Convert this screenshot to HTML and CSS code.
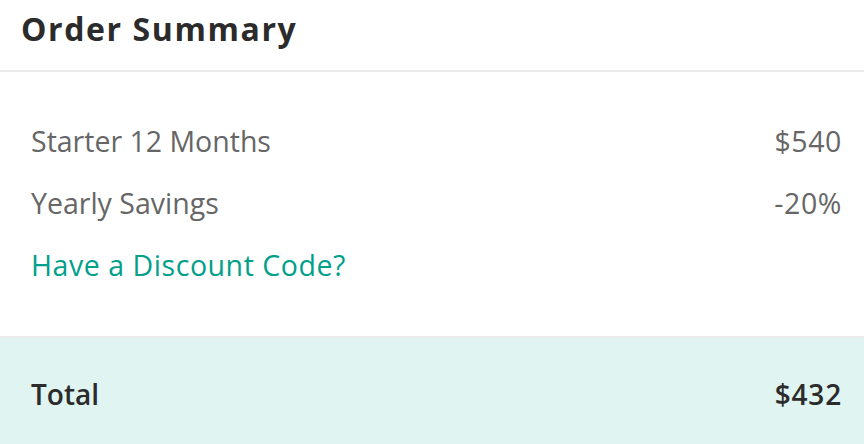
FILE: index.html
```html
<!DOCTYPE html>
<html>
<head>
<meta charset="utf-8">
<link rel="stylesheet" href="styles.css">
</head>
<body>
<div class="summary">
  <div class="summary-header">
    <h1 class="summary-title">Order Summary</h1>
  </div>
  <div class="summary-body">
    <div class="line">
      <span class="line-label">Starter 12 Months</span>
      <span class="line-value">$540</span>
    </div>
    <div class="line">
      <span class="line-label">Yearly Savings</span>
      <span class="line-value">-20%</span>
    </div>
    <div class="line">
      <a class="discount-link" href="#">Have a Discount Code?</a>
    </div>
  </div>
  <div class="summary-total">
    <span class="total-label">Total</span>
    <span class="total-value">$432</span>
  </div>
</div>
</body>
</html>
```
FILE: styles.css
```css
html, body {
  margin: 0;
  padding: 0;
  background: #ffffff;
}
body {
  font-family: "Open Sans", "DejaVu Sans", sans-serif;
  width: 864px;
  height: 444px;
  overflow: hidden;
}
.summary {
  display: flex;
  flex-direction: column;
  height: 444px;
}
.summary-header {
  border-bottom: 2px solid #ebebeb;
  padding: 9px 21px 0;
  box-sizing: border-box;
  height: 72px;
}
.summary-title {
  margin: 0;
  font-size: 32px;
  font-weight: 700;
  letter-spacing: 1.6px;
  color: #2b2b2b;
  line-height: 40px;
}
.summary-body {
  height: 266px;
  border-bottom: 2px solid #ececec;
  padding: 38px 22px 0 31px;
  box-sizing: border-box;
  display: flex;
  flex-direction: column;
}
.line {
  height: 62px;
  display: flex;
  justify-content: space-between;
  align-items: flex-start;
  font-size: 28.5px;
  line-height: 62px;
  color: #666666;
}
.line-value {
  letter-spacing: 0.6px;
}
.discount-link {
  color: #00a08a;
  text-decoration: none;
  letter-spacing: 0.55px;
}
.summary-total {
  flex: 1;
  background: #e0f4f2;
  display: flex;
  justify-content: space-between;
  align-items: flex-start;
  padding: 36px 22px 0 31px;
  font-size: 28px;
  line-height: 40px;
  font-weight: 600;
  color: #2b2b2b;
}
.total-value {
  letter-spacing: 0.8px;
}
```
